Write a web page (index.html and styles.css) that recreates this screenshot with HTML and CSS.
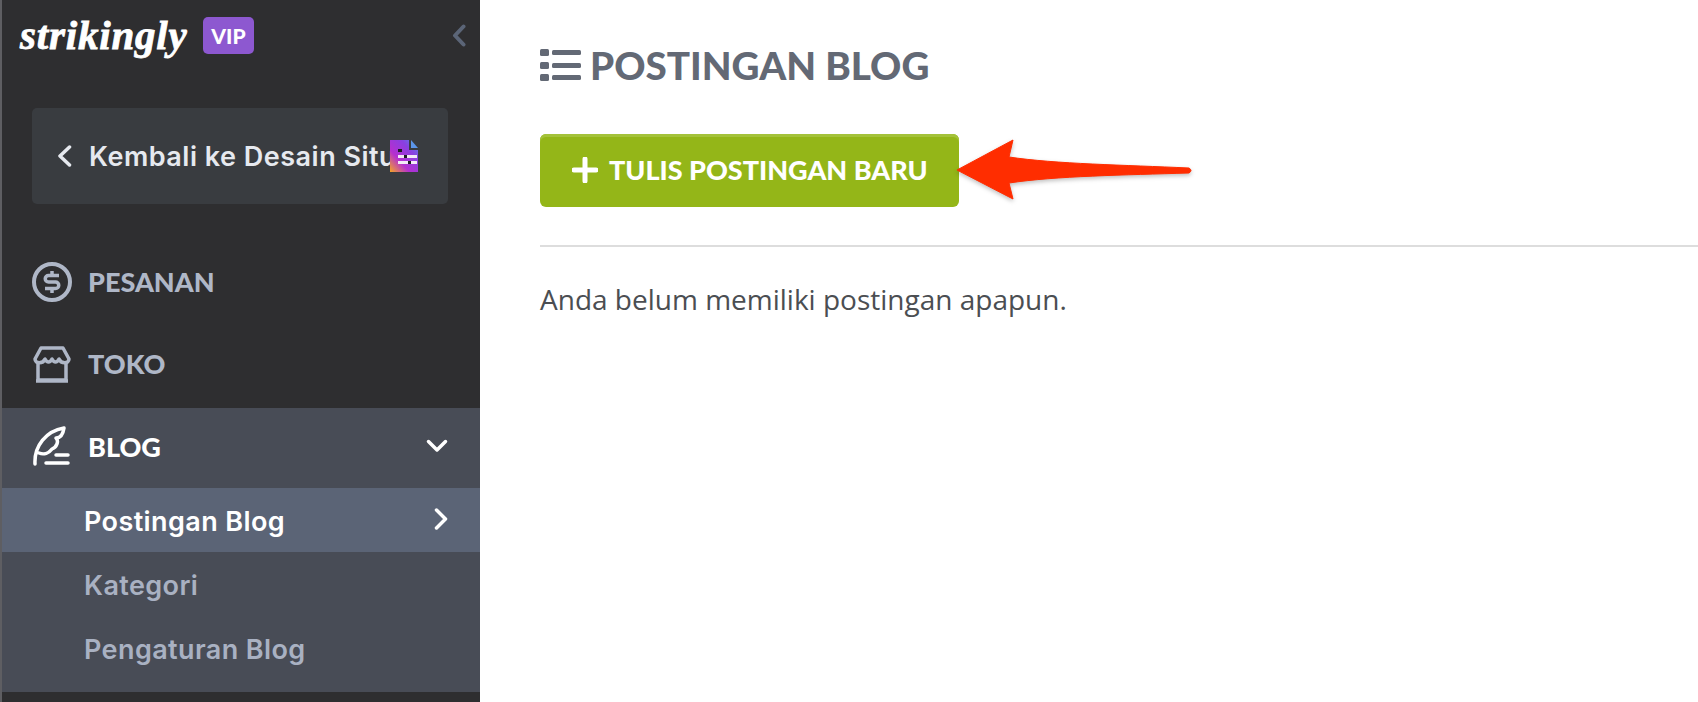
FILE: index.html
```html
<!DOCTYPE html>
<html lang="en">

<head>
    <meta charset="UTF-8">
    <meta name="viewport" content="width=device-width, initial-scale=1.0">
    <title>Postingan Blog</title>
    <link rel="stylesheet" href="styles.css">
</head>

<body>
    <!-- Sidebar -->
    <aside class="sidebar">
        <div class="brand">
            <span class="logo">strikingly</span>
            <span class="vip">VIP</span>
            <svg class="collapse" width="14" height="23" viewBox="0 0 14 23"><path d="M11.500 2.500 3 11.500 11.500 20.500" fill="none" stroke="#5b6577" stroke-width="4" stroke-linecap="round" stroke-linejoin="round"/></svg>
        </div>

        <a class="back-link">
            <svg width="15" height="22" viewBox="0 0 15 22"><path d="M12.500 2 3 11 12.500 20" fill="none" stroke="#e6e9ef" stroke-width="3.500" stroke-linecap="round" stroke-linejoin="round"/></svg>
            <span class="back-text">Kembali ke Desain Situs</span>
            <svg class="doc-icon" width="28" height="32" viewBox="0 0 28 32">
                <defs>
                    <linearGradient id="docGrad" x1="0" y1="1" x2="1" y2="0">
                        <stop offset="0" stop-color="#f5a623"/>
                        <stop offset="0.35" stop-color="#b52fd0"/>
                        <stop offset="0.7" stop-color="#8a3fe0"/>
                        <stop offset="1" stop-color="#4f8fe8"/>
                    </linearGradient>
                </defs>
                <path d="M0 0H19V10H28V32H0Z" fill="url(#docGrad)"/>
                <path d="M21 0 28 8H21Z" fill="#5b96ea"/>
                <rect x="8" y="9" width="4" height="3" fill="#1d1d22"/>
                <rect x="8" y="15" width="19" height="3" fill="#f3e8f7"/>
                <rect x="14" y="15" width="3" height="3" fill="#1d1d22"/>
                <rect x="8" y="21" width="19" height="3" fill="#f3e8f7"/>
                <rect x="18" y="21" width="3" height="3" fill="#1d1d22"/>
            </svg>
        </a>

        <nav class="nav">
            <a class="nav-item">
                <svg class="nav-icon" width="40" height="40" viewBox="0 0 40 40" fill="none" stroke="#afb7c7" stroke-width="4">
                    <circle cx="20" cy="20" r="18"/>
                    <path d="M27 13.500H16.500a3.200 3.200 0 0 0 0 6.500h7a3.200 3.200 0 0 1 0 6.500H13M20 9v4.500M20 26.500V31" stroke-width="3.500"/>
                </svg>
                <span>PESANAN</span>
            </a>
            <a class="nav-item">
                <svg class="nav-icon" width="40" height="40" viewBox="0 0 40 40" fill="none" stroke="#afb7c7" stroke-width="3.500" stroke-linejoin="round">
                    <path d="M9 4H31L37 15C37 20 29 20 27 15C25 19 22 19 20 15C18 19 15 19 13 15C11 20 3 20 3 15Z"/>
                    <path d="M6 19V36H34V19M4 37H36"/>
                </svg>
                <span>TOKO</span>
            </a>
            <div class="nav-group">
                <a class="nav-item active">
                    <svg class="nav-icon" width="40" height="40" viewBox="0 0 40 40" fill="none" stroke="#fff" stroke-width="3.500" stroke-linecap="round" stroke-linejoin="round">
                        <path d="M3 38C2 20 14 5 32 2C31 9 28 12 24 12C27 15 25 21 20 23C17 27 12 29 7 27"/>
                        <path d="M24 29H36M14 37H36"/>
                    </svg>
                    <span>BLOG</span>
                    <svg class="nav-arrow" width="22" height="14" viewBox="0 0 22 14"><path d="M2.500 2.500 11 11 19.500 2.500" fill="none" stroke="#fff" stroke-width="3.500" stroke-linecap="round" stroke-linejoin="round"/></svg>
                </a>
                <a class="sub-item current">
                    <span>Postingan Blog</span>
                    <svg class="sub-arrow" width="14" height="22" viewBox="0 0 14 22"><path d="M2.500 2 11.500 11 2.500 20" fill="none" stroke="#fff" stroke-width="3.500" stroke-linecap="round" stroke-linejoin="round"/></svg>
                </a>
                <a class="sub-item">Kategori</a>
                <a class="sub-item">Pengaturan Blog</a>
            </div>
        </nav>
    </aside>

    <!-- Main Container -->
    <main class="content">
        <h1 class="page-title">
            <svg width="41" height="32" viewBox="0 0 41 32" fill="#636975">
                <rect x="0" y="0" width="9" height="7" rx="1.500"/>
                <rect x="0" y="13" width="9" height="7" rx="1.500"/>
                <rect x="0" y="25" width="9" height="7" rx="1.500"/>
                <rect x="12" y="1" width="29" height="5" rx="1.500"/>
                <rect x="12" y="14" width="29" height="5" rx="1.500"/>
                <rect x="12" y="26" width="29" height="5" rx="1.500"/>
            </svg>
            POSTINGAN BLOG
        </h1>

        <div class="actions">
            <button class="new-post">
                <svg width="26" height="26" viewBox="0 0 26 26"><path d="M13 2V24M2 13H24" fill="none" stroke="#fff" stroke-width="5" stroke-linecap="round"/></svg>
                TULIS POSTINGAN BARU
            </button>
            <!-- Annotation arrow -->
            <svg class="arrow" width="240" height="64" viewBox="0 0 240 64">
                <path d="M2 32 58 2 54 19C100 26 170 27 234 30Q238 32.500 234 35C170 37 100 38 54 45L58 61Z" fill="#ff2d00" stroke="#ff2d00" stroke-linejoin="round"/>
            </svg>
        </div>

        <hr class="divider">

        <p class="empty">Anda belum memiliki postingan apapun.</p>
    </main>
</body>

</html>
```

FILE: styles.css
```css
/* Global Styles */
html,
body {
    height: 100%;
}

body {
    margin: 0;
    display: flex;
    background: #fff;
    overflow: hidden;
}

a {
    display: flex;
    align-items: center;
}

/* Sidebar */
.sidebar {
    width: 478px;
    flex-shrink: 0;
    background: #2e2e30;
    border-left: 2px solid #5e5e62;
    font-family: Inter, sans-serif;
}

.brand {
    display: flex;
    align-items: center;
    height: 70px;
    padding-left: 18px;
}

.logo {
    width: 183px;
    font-family: "Liberation Serif", serif;
    font-weight: bold;
    font-style: italic;
    font-size: 41px;
    letter-spacing: 0.8px;
    color: #fff;
    -webkit-text-stroke: 0.8px #fff;
}

.vip {
    width: 51px;
    height: 37px;
    border-radius: 5px;
    background: #8d58d0;
    color: #fff;
    font-family: Lato, sans-serif;
    font-weight: 900;
    font-size: 21px;
    line-height: 37px;
    text-align: center;
}

.collapse {
    margin-left: auto;
    margin-right: 14px;
}

.back-link {
    position: relative;
    height: 96px;
    margin: 38px 32px 0 30px;
    padding-left: 25px;
    gap: 17px;
    background: #393c40;
    border-radius: 5px;
    color: #e6e9ef;
    font-weight: 600;
    font-size: 27px;
    letter-spacing: 0.5px;
}

.back-text {
    white-space: nowrap;
}

.doc-icon {
    position: absolute;
    left: 358px;
    top: 32px;
}

/* Nav */
.nav {
    margin-top: 38px;
}

.nav-item {
    box-sizing: border-box;
    height: 82px;
    padding: 0 32px 3px 30px;
    gap: 16px;
    color: #afb7c7;
    font-family: Lato, sans-serif;
    font-weight: 900;
    font-size: 27px;
}

.nav-item.active {
    height: 80px;
    padding-bottom: 4px;
    color: #fff;
}

.nav-arrow {
    margin-left: auto;
}

.nav-group {
    margin-top: 2px;
    background: #484c56;
    padding-bottom: 12px;
}

.sub-item {
    box-sizing: border-box;
    height: 64px;
    padding: 3px 32px 0 82px;
    justify-content: space-between;
    color: #a9b1c2;
    font-weight: 600;
    font-size: 27px;
    letter-spacing: 0.4px;
}

.sub-item.current {
    background: #5b6476;
    color: #fff;
}

.sub-arrow {
    margin-bottom: 5px;
}

/* Main Container */
.content {
    flex: 1;
    padding: 40px 0 0 60px;
    font-family: "Open Sans", sans-serif;
}

.page-title {
    display: flex;
    align-items: center;
    gap: 9px;
    margin: 0;
    height: 50px;
    color: #636975;
    font-family: Lato, sans-serif;
    font-weight: 900;
    font-size: 38.600px;
}

.actions {
    position: relative;
    margin-top: 44px;
}

.new-post {
    display: flex;
    align-items: center;
    gap: 11px;
    box-sizing: border-box;
    width: 419px;
    height: 73px;
    padding: 0 0 2px 32px;
    border: none;
    border-radius: 6px;
    background: #94b618;
    box-shadow: inset 0 3px 0 #a4c23a;
    color: #fff;
    font-family: Lato, sans-serif;
    font-weight: 900;
    font-size: 27px;
    white-space: nowrap;
}

.arrow {
    position: absolute;
    left: 415px;
    top: 4px;
    filter: drop-shadow(0 2px 2px rgba(0, 0, 0, 0.25));
}

.divider {
    margin: 38px 0 0;
    border: none;
    height: 2px;
    background: #dddddd;
}

.empty {
    margin: 33px 0 0;
    color: #4b4e52;
    font-size: 28px;
}
```
